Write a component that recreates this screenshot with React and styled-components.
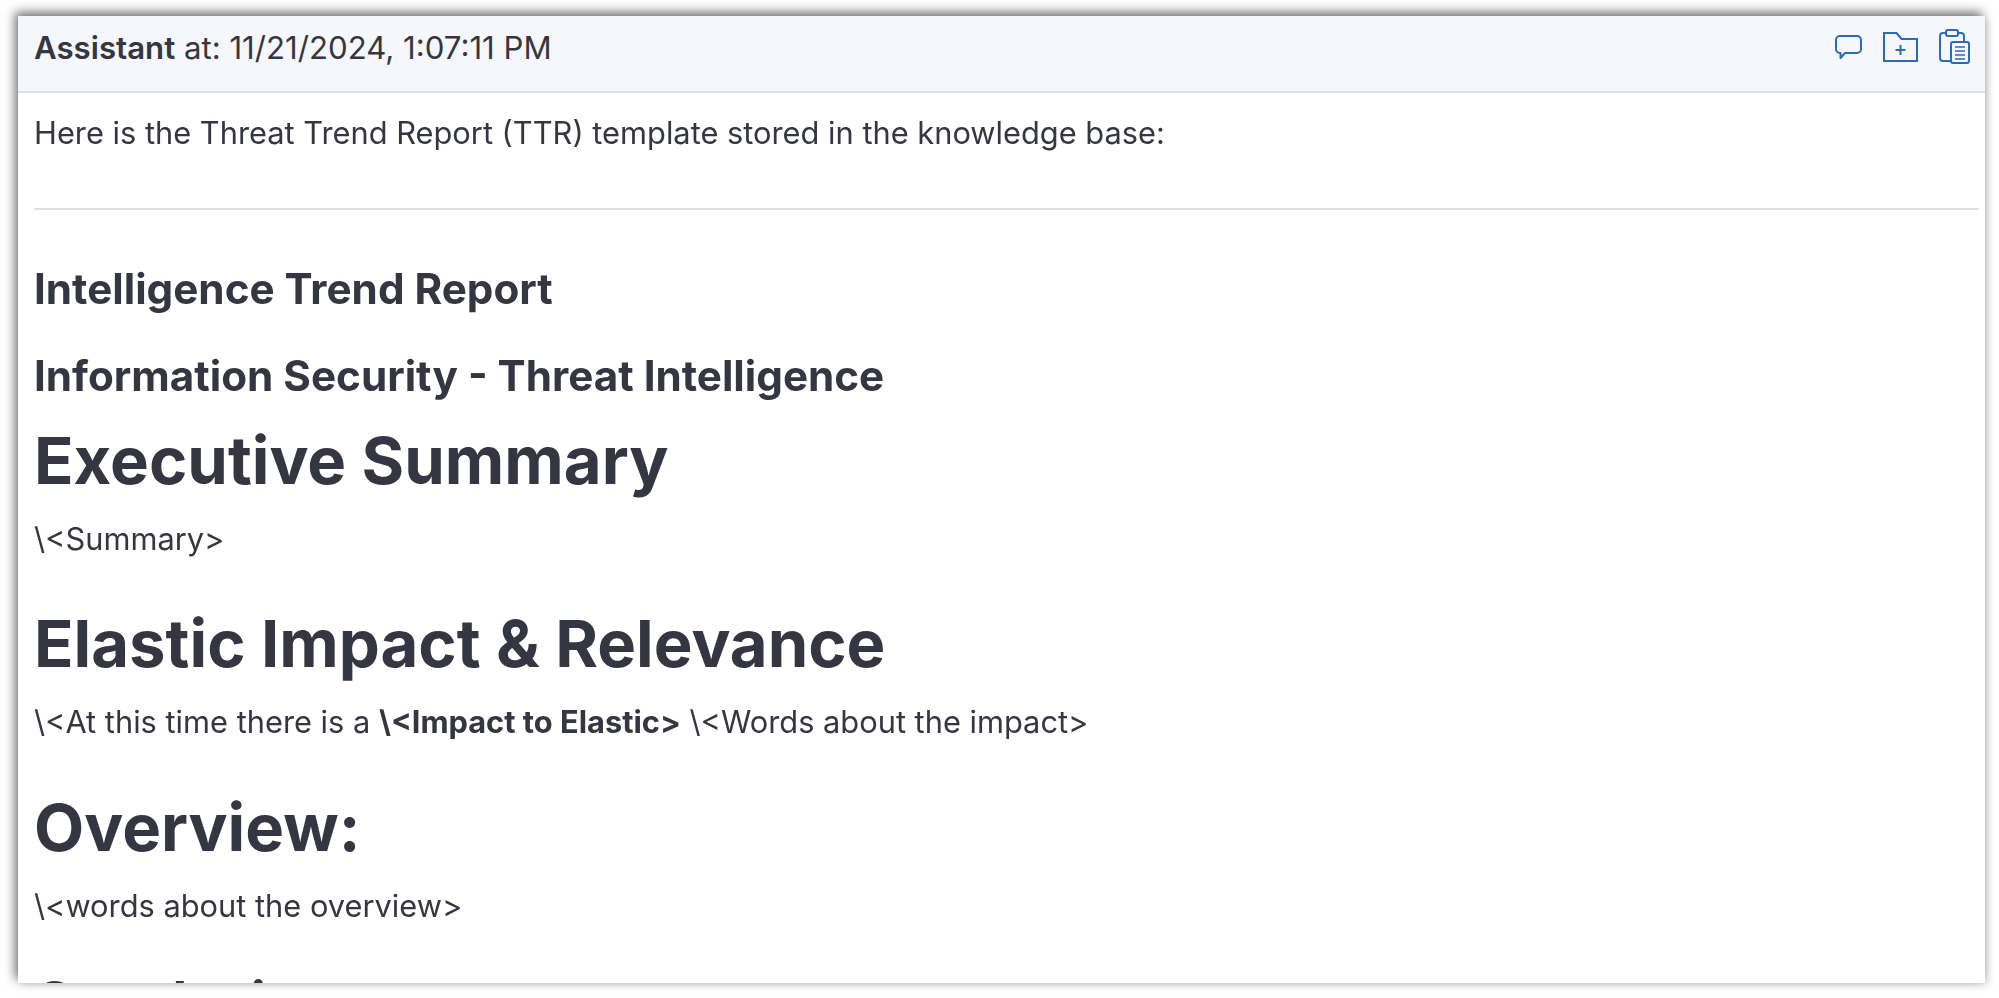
import React from "react";
import styled, { createGlobalStyle } from "styled-components";

const GlobalStyle = createGlobalStyle`
  html, body {
    margin: 0;
    padding: 0;
    background: #fff;
  }
  body {
    font-family: Inter, "Liberation Sans", sans-serif;
    color: #343741;
    overflow: hidden;
  }
`;

function CommentIcon() {
  return (
    <svg width="27" height="24" viewBox="0 0 27 24" fill="none" stroke="#2b6cb5" strokeWidth="2">
      <path d="M5 1h17a4 4 0 0 1 4 4v9a4 4 0 0 1-4 4H10l-4.5 5v-5H5a4 4 0 0 1-4-4V5a4 4 0 0 1 4-4z" strokeLinejoin="round" />
    </svg>
  );
}

function FolderIcon() {
  return (
    <svg width="35" height="30" viewBox="0 0 35 30" fill="none" stroke="#2b6cb5" strokeWidth="2">
      <path d="M1 1h12.5l5 6H34v22H1z" />
      <path d="M12.5 18h10M17.5 13v10" />
    </svg>
  );
}

function ClipboardIcon() {
  return (
    <svg width="31" height="35" viewBox="0 0 31 35" fill="none" stroke="#2b6cb5" strokeWidth="2">
      <path d="M7 4H4a3 3 0 0 0-3 3v22a3 3 0 0 0 3 3h8" />
      <path d="M19 4h3a3 3 0 0 1 3 3v5" />
      <rect x="7" y="1" width="12" height="6" rx="2" />
      <rect x="12" y="13" width="18" height="21" rx="2" />
      <path d="M16 18h10M16 22h10M16 26h10M16 30h10" strokeWidth="1.7" />
    </svg>
  );
}

export default function App() {
  return (
    <>
      <GlobalStyle />
      <Page>
        <Panel>
          <Header>
            <Meta>
              <strong>Assistant</strong> at: 11/21/2024, 1:07:11 PM
            </Meta>
            <Actions>
              <CommentIcon />
              <FolderIcon />
              <ClipboardIcon />
            </Actions>
          </Header>
          <Body>
            <Para>Here is the Threat Trend Report (TTR) template stored in the knowledge base:</Para>
            <Rule />
            <SubHeading>Intelligence Trend Report</SubHeading>
            <SubHeading>Information Security - Threat Intelligence</SubHeading>
            <Heading>Executive Summary</Heading>
            <Para>\&lt;Summary&gt;</Para>
            <Heading $gap={43}>Elastic Impact &amp; Relevance</Heading>
            <Para>
              \&lt;At this time there is a <strong>\&lt;Impact to Elastic&gt;</strong> \&lt;Words about the impact&gt;
            </Para>
            <Heading $gap={44}>Overview:</Heading>
            <Para>\&lt;words about the overview&gt;</Para>
            <SectionHeading>Conclusion</SectionHeading>
          </Body>
        </Panel>
      </Page>
    </>
  );
}

const Page = styled.div`
  width: 1999px;
  height: 998px;
  padding: 16px 14px 15px 18px;
  box-sizing: border-box;
`;

const Panel = styled.div`
  height: 100%;
  background: #fff;
  overflow: hidden;
  box-shadow: -3px -4px 10px rgba(0, 0, 0, 0.55), 3px 3px 8px rgba(0, 0, 0, 0.12);
  filter: blur(0.5px);
`;

const Header = styled.div`
  height: 77px;
  box-sizing: border-box;
  padding: 0 15px 0 16px;
  display: flex;
  align-items: center;
  justify-content: space-between;
  background: #f5f7fc;
  border-bottom: 2px solid #d9e0ef;
`;

const Meta = styled.div`
  font-size: 31.2px;
  margin-top: -12px;
  strong {
    font-weight: 600;
  }
`;

const Actions = styled.div`
  display: flex;
  align-items: center;
  gap: 21px;
  margin-top: -14px;
`;

const Body = styled.div`
  padding: 18px 6px 0 16px;
`;

const Para = styled.p`
  margin: 0;
  font-size: 30.8px;
  line-height: 44px;
  strong {
    font-weight: 700;
  }
`;

const Rule = styled.hr`
  border: 0;
  height: 2px;
  background: #dcdfe5;
  margin: 53px 0 53px;
`;

const SubHeading = styled.h3`
  margin: 0 0 35px;
  font-size: 42.2px;
  line-height: 52px;
  font-weight: 700;
  &:nth-of-type(2) {
    margin-bottom: 19px;
  }
`;

const Heading = styled.h1`
  margin: ${(p) => p.$gap || 0}px 0 16px;
  font-size: 65.2px;
  line-height: 80px;
  font-weight: 700;
`;

const SectionHeading = styled.h2`
  margin: 40px 0 0;
  font-size: 54px;
  line-height: 66px;
  font-weight: 700;
`;
